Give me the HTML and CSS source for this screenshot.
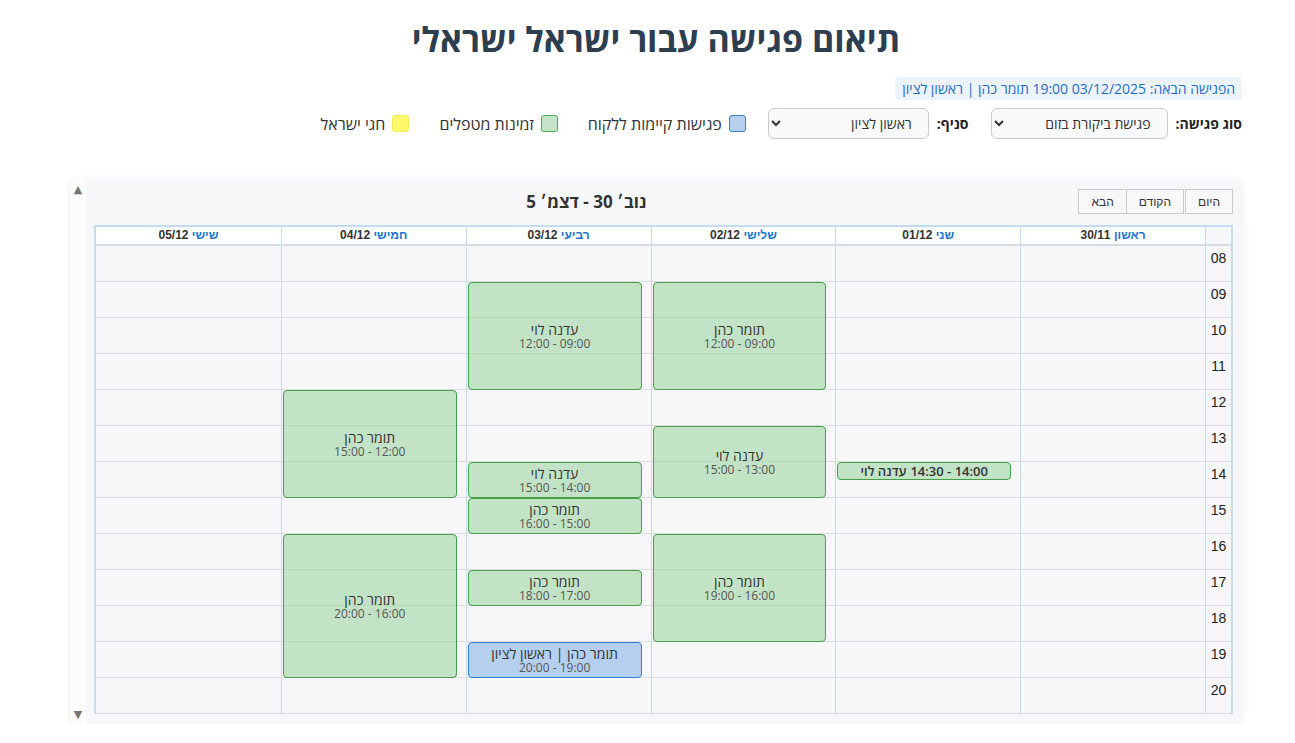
FILE: index.html
```html
<!DOCTYPE html>
<html lang="he" dir="rtl">
<head>
    <meta charset="UTF-8">
    <meta name="viewport" content="width=device-width, initial-scale=1.0">
    <title>תיאום פגישה</title>
    <link rel="stylesheet" href="styles.css">
</head>
<body>
    <h1 class="page-title">תיאום פגישה עבור ישראל ישראלי</h1>

    <div class="next-row">
        <div class="next-meeting">הפגישה הבאה: 03/12/2025 19:00 תומר כהן | ראשון לציון</div>
    </div>

    <div class="controls">
        <label class="field">
            <span>סוג פגישה:</span>
            <select class="field-select type-select">
                <option>פגישת ביקורת בזום</option>
            </select>
        </label>
        <label class="field">
            <span>סניף:</span>
            <select class="field-select branch-select">
                <option>ראשון לציון</option>
            </select>
        </label>
        <div class="legend">
            <span class="legend-item"><span class="swatch swatch-booked"></span>פגישות קיימות ללקוח</span>
            <span class="legend-item"><span class="swatch swatch-free"></span>זמינות מטפלים</span>
            <span class="legend-item"><span class="swatch swatch-holiday"></span>חגי ישראל</span>
        </div>
    </div>

    <div class="calendar">
        <div class="cal-main">
            <div class="cal-toolbar">
                <div class="btn-row">
                    <button class="btn">היום</button>
                    <div class="btn-group">
                        <button class="btn">הקודם</button>
                        <button class="btn">הבא</button>
                    </div>
                </div>
                <h2 class="cal-title">נוב׳ 30 - דצמ׳ 5</h2>
                <div></div>
            </div>

            <div class="week">
                <div class="week-head">
                    <div class="head-cell head-corner"></div>
                    <div class="head-cell"><span class="day-name">ראשון</span> 30/11</div>
                    <div class="head-cell"><span class="day-name">שני</span> 01/12</div>
                    <div class="head-cell"><span class="day-name">שלישי</span> 02/12</div>
                    <div class="head-cell"><span class="day-name">רביעי</span> 03/12</div>
                    <div class="head-cell"><span class="day-name">חמישי</span> 04/12</div>
                    <div class="head-cell"><span class="day-name">שישי</span> 05/12</div>
                </div>

                <div class="week-body">
                    <div class="hours">
                        <div class="hour">08</div>
                        <div class="hour">09</div>
                        <div class="hour">10</div>
                        <div class="hour">11</div>
                        <div class="hour">12</div>
                        <div class="hour">13</div>
                        <div class="hour">14</div>
                        <div class="hour">15</div>
                        <div class="hour">16</div>
                        <div class="hour">17</div>
                        <div class="hour">18</div>
                        <div class="hour">19</div>
                        <div class="hour">20</div>
                    </div>

                    <!-- ראשון -->
                    <div class="day"></div>

                    <!-- שני -->
                    <div class="day">
                        <div class="event event-short" style="grid-row: 13 / 14;">
                            <span>14:00 - 14:30</span>
                            <span>עדנה לוי</span>
                        </div>
                    </div>

                    <!-- שלישי -->
                    <div class="day">
                        <div class="event" style="grid-row: 3 / 9;">
                            <span class="event-title">תומר כהן</span>
                            <span class="event-time">09:00 - 12:00</span>
                        </div>
                        <div class="event" style="grid-row: 11 / 15;">
                            <span class="event-title">עדנה לוי</span>
                            <span class="event-time">13:00 - 15:00</span>
                        </div>
                        <div class="event" style="grid-row: 17 / 23;">
                            <span class="event-title">תומר כהן</span>
                            <span class="event-time">16:00 - 19:00</span>
                        </div>
                    </div>

                    <!-- רביעי -->
                    <div class="day">
                        <div class="event" style="grid-row: 3 / 9;">
                            <span class="event-title">עדנה לוי</span>
                            <span class="event-time">09:00 - 12:00</span>
                        </div>
                        <div class="event" style="grid-row: 13 / 15;">
                            <span class="event-title">עדנה לוי</span>
                            <span class="event-time">14:00 - 15:00</span>
                        </div>
                        <div class="event" style="grid-row: 15 / 17;">
                            <span class="event-title">תומר כהן</span>
                            <span class="event-time">15:00 - 16:00</span>
                        </div>
                        <div class="event" style="grid-row: 19 / 21;">
                            <span class="event-title">תומר כהן</span>
                            <span class="event-time">17:00 - 18:00</span>
                        </div>
                        <div class="event event-booked" style="grid-row: 23 / 25;">
                            <span class="event-title">תומר כהן | ראשון לציון</span>
                            <span class="event-time">19:00 - 20:00</span>
                        </div>
                    </div>

                    <!-- חמישי -->
                    <div class="day">
                        <div class="event" style="grid-row: 9 / 15;">
                            <span class="event-title">תומר כהן</span>
                            <span class="event-time">12:00 - 15:00</span>
                        </div>
                        <div class="event" style="grid-row: 17 / 25;">
                            <span class="event-title">תומר כהן</span>
                            <span class="event-time">16:00 - 20:00</span>
                        </div>
                    </div>

                    <!-- שישי -->
                    <div class="day"></div>
                </div>
            </div>
        </div>

        <div class="cal-rail">
            <span class="rail-arrow">▲</span>
            <span class="rail-arrow">▼</span>
        </div>
    </div>
</body>
</html>
```

FILE: styles.css
```css
* {
    box-sizing: border-box;
}

body {
    margin: 0;
    padding: 0 53px 0 70px;
    direction: rtl;
    font-family: "Open Sans", "Liberation Sans", sans-serif;
    color: #333;
    background: #fff;
}

.page-title {
    margin: 16px 0 0;
    text-align: center;
    font-size: 34px;
    line-height: 46px;
    font-weight: 700;
    color: #2c3e50;
}

.next-row {
    display: flex;
    margin-top: 15px;
}

.next-meeting {
    padding: 3px 7px;
    border-radius: 4px;
    background: #ecf3fb;
    color: #1e6fc8;
    font-size: 14px;
    line-height: 17px;
}

.controls {
    display: flex;
    align-items: center;
    gap: 22px;
    margin-top: 8px;
}

.field {
    display: flex;
    align-items: center;
    gap: 8px;
    font-size: 14px;
    font-weight: 700;
    color: #222;
}

.field-select {
    height: 31px;
    padding: 0 12px 0 8px;
    border: 1px solid #ccc;
    border-radius: 6px;
    background: #f8f9fa;
    color: #333;
    font-family: "Open Sans", "Liberation Sans", sans-serif;
    font-size: 14px;
}

.type-select {
    width: 177px;
}

.branch-select {
    width: 161px;
}

.legend {
    display: flex;
    gap: 30px;
}

.legend-item {
    display: flex;
    align-items: center;
    gap: 7px;
    font-size: 16px;
    color: #333;
}

.swatch {
    width: 17px;
    height: 17px;
    border-radius: 3px;
    border: 1px solid;
}

.swatch-booked {
    background: #b5d0ef;
    border-color: #3a7fc8;
}

.swatch-free {
    background: #c5e3c8;
    border-color: #4caf50;
}

.swatch-holiday {
    background: #fdf86a;
    border-color: #f2ea5c;
}

/* לוח שנה */
.calendar {
    display: flex;
    margin-top: 41px;
    height: 544px;
    background: #f7f7f9;
    border-radius: 8px;
    box-shadow: 0 1px 8px rgba(0, 0, 0, 0.07);
    overflow: hidden;
}

.cal-main {
    flex: 1;
    min-width: 0;
    padding: 9px 9px 9px 8px;
}

.cal-rail {
    width: 16px;
    display: flex;
    flex-direction: column;
    justify-content: space-between;
    align-items: center;
    padding: 3px 0 2px;
    background: #fcfcfc;
}

.rail-arrow {
    font-family: "DejaVu Sans", sans-serif;
    font-size: 11px;
    line-height: 14px;
    color: #767676;
}

.cal-toolbar {
    display: flex;
    justify-content: space-between;
    align-items: center;
    height: 25px;
    margin-bottom: 11px;
}

.btn-row {
    display: flex;
    gap: 1px;
}

.btn-group {
    display: flex;
}

.btn-group .btn + .btn {
    margin-right: -1px;
}

.btn {
    height: 25px;
    padding: 0 12px;
    border: 1px solid #ccc;
    background: #f8f8f8;
    color: #333;
    font-family: "Liberation Sans", Arial, sans-serif;
    font-size: 12px;
    cursor: pointer;
}

.cal-title {
    margin: 0;
    font-size: 17px;
    font-weight: 700;
    color: #333;
}

.week {
    border: 2px solid #c3dcf3;
    border-bottom: 0;
}

.week-head,
.week-body {
    display: grid;
    grid-template-columns: 26px repeat(6, 1fr);
}

.week-head {
    border-bottom: 2px solid #d6dce4;
}

.head-cell {
    height: 17px;
    line-height: 17px;
    background: #fff;
    border-left: 1px solid #c3dcf3;
    text-align: center;
    font-family: "Liberation Sans", Arial, sans-serif;
    font-size: 12px;
    font-weight: 700;
    color: #333;
}

.head-cell:last-child {
    border-left: 0;
}

.head-corner {
    background: #f5f6f8;
}

.day-name {
    color: #1976d2;
}

.hours,
.day {
    border-left: 1px solid #c8dcef;
}

.day:last-child {
    border-left: 0;
}

.hour {
    height: 36px;
    padding-top: 4px;
    border-bottom: 1px solid #dcdde2;
    text-align: center;
    font-family: "Liberation Sans", Arial, sans-serif;
    font-size: 14px;
    color: #222;
}

.day {
    display: grid;
    grid-template-rows: repeat(26, 18px);
    background: repeating-linear-gradient(to bottom, transparent 0 35px, #dcdde2 35px 36px);
}

.event {
    margin: 0 9px 0 1px;
    min-width: 0;
    display: flex;
    flex-direction: column;
    justify-content: center;
    align-items: center;
    border: 1px solid #43a047;
    border-radius: 4px;
    background: rgba(168, 216, 172, 0.65);
    text-align: center;
}

.event-title {
    font-size: 14px;
    line-height: 15px;
    color: #333;
}

.event-time {
    font-size: 12px;
    line-height: 13px;
    color: #555;
}

.event-booked {
    background: #b5d0ef;
    border-color: #2f7fd6;
}

.event-short {
    flex-direction: row;
    gap: 4px;
    font-size: 13px;
    font-weight: 600;
    line-height: 1;
    color: #333;
}
```
